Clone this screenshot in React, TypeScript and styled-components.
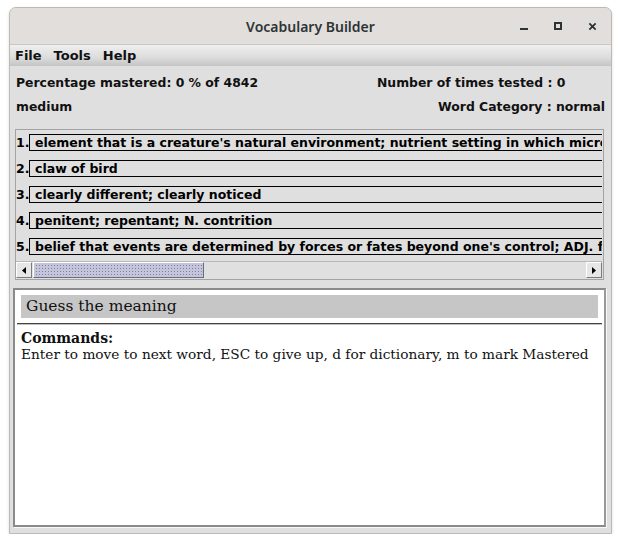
import styled, { createGlobalStyle } from 'styled-components'

const GlobalStyle = createGlobalStyle`
  html, body {
    margin: 0;
    padding: 0;
    background: #ffffff;
  }
`

const definitions = [
  "element that is a creature's natural environment; nutrient setting in which micro",
  'claw of bird',
  'clearly different; clearly noticed',
  'penitent; repentant; N. contrition',
  "belief that events are determined by forces or fates beyond one's control; ADJ. f",
]

const App = () => {
  return (
    <>
      <GlobalStyle />
      <Window>
        <TitleBar>
          <Title>Vocabulary Builder</Title>
          <Controls>
            <Minimize />
            <Maximize />
            <Close viewBox="0 0 10 10">
              <path d="M1.5 1.5 L8.5 8.5 M8.5 1.5 L1.5 8.5" stroke="#2e3436" strokeWidth="2" />
            </Close>
          </Controls>
        </TitleBar>
        <MenuBar>
          <MenuItem>File</MenuItem>
          <MenuItem>Tools</MenuItem>
          <MenuItem>Help</MenuItem>
        </MenuBar>
        <Info>
          <Label>Percentage mastered: 0 % of 4842</Label>
          <Label>Number of times tested : 0</Label>
          <Label>medium</Label>
          <Label $right>Word Category : normal</Label>
        </Info>
        <ListPanel>
          <Rows>
            {definitions.map((text, i) => (
              <Row key={i}>
                <Num>{i + 1}.</Num>
                <Definition>{text}</Definition>
              </Row>
            ))}
          </Rows>
          <ScrollBar>
            <ArrowButton>
              <svg width="4" height="7" viewBox="0 0 4 7">
                <path d="M4 0 L0 3.5 L4 7 Z" fill="#000" />
              </svg>
            </ArrowButton>
            <Track>
              <Thumb />
            </Track>
            <ArrowButton>
              <svg width="4" height="7" viewBox="0 0 4 7">
                <path d="M0 0 L4 3.5 L0 7 Z" fill="#000" />
              </svg>
            </ArrowButton>
          </ScrollBar>
        </ListPanel>
        <Editor>
          <Heading>Guess the meaning</Heading>
          <Rule />
          <Commands>Commands:</Commands>
          <Help>Enter to move to next word, ESC to give up, d for dictionary, m to mark Mastered</Help>
        </Editor>
      </Window>
    </>
  )
}

export default App

const Window = styled('div')`
  display: flex;
  flex-direction: column;
  box-sizing: border-box;
  width: 603px;
  height: 527px;
  margin: 7px 0 0 9px;
  background: #dfdfdf;
  border: 1px solid #bdbab6;
  border-radius: 7px 7px 0 0;
  overflow: hidden;
  box-shadow: 0 1px 3px rgba(0, 0, 0, 0.15);
`

const TitleBar = styled('div')`
  position: relative;
  display: flex;
  align-items: center;
  justify-content: center;
  height: 36px;
  flex-shrink: 0;
  background: #e1dedb;
  border-bottom: 1px solid #cbc7c3;
`

const Title = styled('div')`
  font-family: 'Noto Sans', sans-serif;
  font-size: 14px;
  font-weight: 600;
  color: #2e3436;
`

const Controls = styled('div')`
  position: absolute;
  top: 0;
  right: 14px;
  bottom: 0;
  display: flex;
  align-items: center;
  gap: 26px;
`

const Minimize = styled('div')`
  width: 8px;
  height: 2px;
  margin-top: 6px;
  background: #2e3436;
`

const Maximize = styled('div')`
  box-sizing: border-box;
  width: 8px;
  height: 8px;
  border: 2px solid #2e3436;
`

const Close = styled('svg')`
  width: 9px;
  height: 9px;
`

const MenuBar = styled('div')`
  display: flex;
  align-items: center;
  gap: 12px;
  height: 21px;
  flex-shrink: 0;
  padding: 0 5px;
  background: linear-gradient(#efefef, #dcdcdc 60%, #c4c4c4);
`

const MenuItem = styled('span')`
  font-family: 'DejaVu Sans', sans-serif;
  font-size: 13px;
  font-weight: bold;
  color: #111;
`

const Info = styled('div')`
  display: grid;
  grid-template-columns: 361px 1fr;
  grid-auto-rows: 24px;
  align-items: center;
  padding: 4px 6px 0 6px;
`

const Label = styled('div')<{ $right?: boolean }>`
  font-family: 'DejaVu Sans', sans-serif;
  font-size: 12.4px;
  font-weight: bold;
  color: #111;
  white-space: nowrap;
  justify-self: ${(p) => (p.$right ? 'end' : 'start')};
`

const ListPanel = styled('div')`
  display: flex;
  flex-direction: column;
  margin: 11px 7px 0 5px;
  padding: 2px 1px 1px 0;
  border: 1px solid #a3a3a3;
  overflow: hidden;
`

const Rows = styled('div')`
  display: flex;
  flex-direction: column;
  gap: 9px;
  padding: 2px 0 6px 0;
  overflow: hidden;
`

const Row = styled('div')`
  display: flex;
  align-items: center;
  height: 17px;
`

const Num = styled('span')`
  width: 13px;
  flex-shrink: 0;
  font-family: 'DejaVu Sans', sans-serif;
  font-size: 12.5px;
  font-weight: bold;
  color: #000;
`

const Definition = styled('div')`
  flex-shrink: 0;
  box-sizing: border-box;
  height: 17px;
  min-width: 620px;
  padding: 0 5px;
  line-height: 15px;
  border: 1px solid #000;
  font-family: 'DejaVu Sans', sans-serif;
  font-size: 12.5px;
  font-weight: bold;
  color: #000;
  white-space: nowrap;
`

const ScrollBar = styled('div')`
  display: flex;
  height: 16px;
  border-top: 1px solid #b8b8b8;
  background: #dedede;
`

const ArrowButton = styled('div')`
  display: flex;
  align-items: center;
  justify-content: center;
  box-sizing: border-box;
  width: 16px;
  flex-shrink: 0;
  background: #e6e6e6;
  border: 1px solid #7a7a7a;
  border-top-color: #fff;
  border-left-color: #fff;
`

const Track = styled('div')`
  flex: 1;
  display: flex;
  padding: 0 0 0 1px;
  background: #e0e0e0;
`

const Thumb = styled('div')`
  box-sizing: border-box;
  width: 171px;
  height: 100%;
  border: 1px solid #6a6a86;
  border-top-color: #fff;
  border-left-color: #fff;
  background-color: #c4c4da;
  background-image: radial-gradient(#8080a0 0.7px, transparent 0.8px);
  background-size: 3px 3px;
  background-position: 1px 1px;
`

const Editor = styled('div')`
  flex: 1;
  display: flex;
  flex-direction: column;
  margin: 8px 5px 6px 3px;
  padding: 5px 6px 0 6px;
  background: #ffffff;
  border: 2px solid #8a8a8a;
  border-right-color: #9a9a9a;
  border-bottom-color: #8a8a8a;
  box-shadow: 1px 1px 0 #f8f8f8;
`

const Heading = styled('div')`
  height: 23px;
  padding-left: 5px;
  line-height: 23px;
  background: #c6c6c6;
  font-family: 'DejaVu Serif', 'Liberation Serif', serif;
  font-size: 15.5px;
  color: #111;
`

const Rule = styled('div')`
  height: 1px;
  margin: 5px -4px 5px -4px;
  background: #444;
  border-bottom: 1px solid #c0c0c0;
`

const Commands = styled('div')`
  font-family: 'DejaVu Serif', 'Liberation Serif', serif;
  font-size: 14px;
  font-weight: bold;
  line-height: 16px;
  color: #111;
`

const Help = styled('div')`
  font-family: 'DejaVu Serif', 'Liberation Serif', serif;
  font-size: 13.7px;
  line-height: 16px;
  color: #111;
`
